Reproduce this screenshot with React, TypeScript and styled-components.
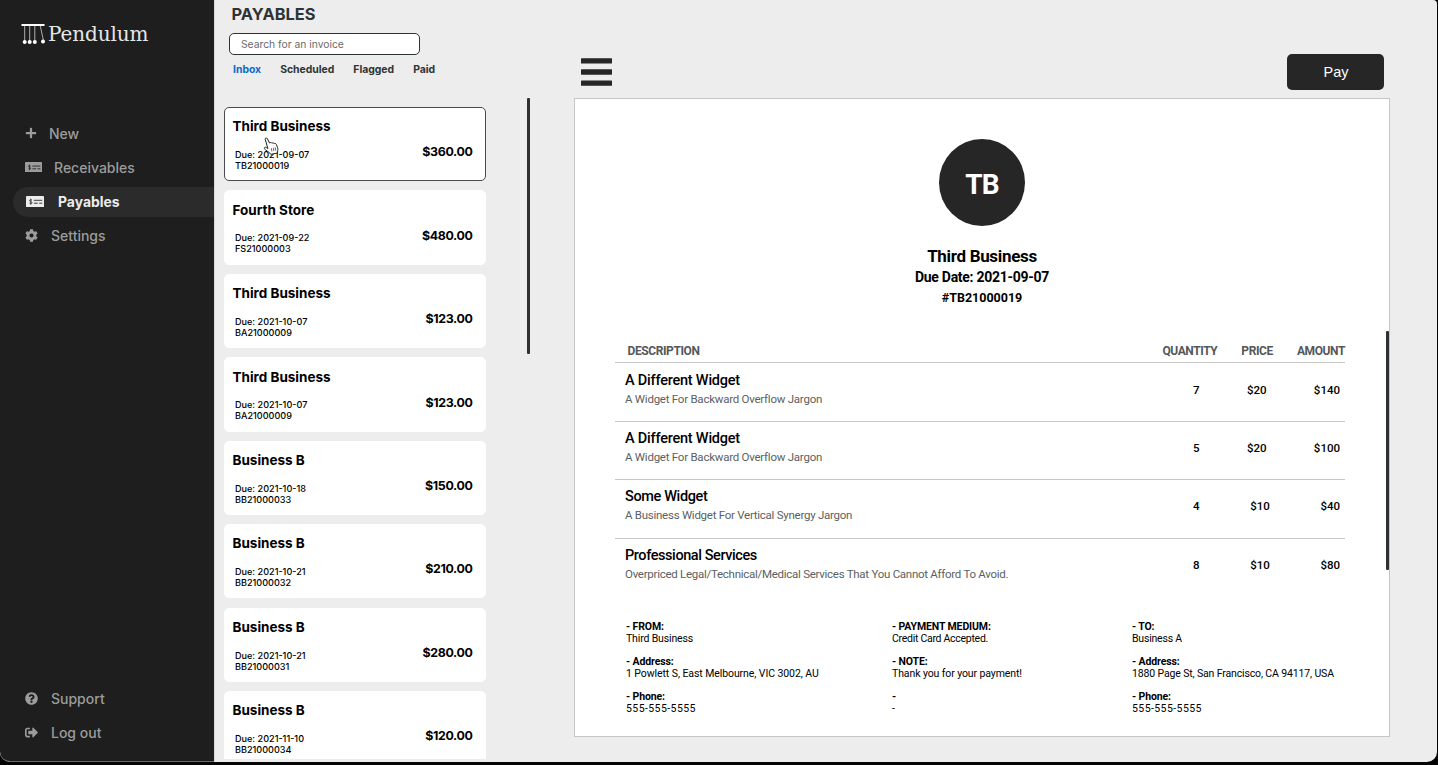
import React from "react";
import styled, { createGlobalStyle } from "styled-components";
import { FaPlus, FaCog, FaQuestionCircle, FaSignOutAlt } from "react-icons/fa";

const ui = `Inter, "Liberation Sans", sans-serif`;
const doc = `Roboto, "Noto Sans", sans-serif`;

const GlobalStyle = createGlobalStyle`
  * { box-sizing: border-box; }
  body { margin: 0; background: #000; overflow: hidden; }
  p, h1, h2, h3 { margin: 0; }
  button { font: inherit; border: 0; padding: 0; background: none; }
`;

const Screen = styled.div`
  height: 765px;
  background: #050506;
  font-family: ${ui};
`;

const Window = styled.div`
  display: flex;
  width: 1437px;
  height: 762px;
  background: #ededed;
  border-radius: 0 4px 10px 10px;
  overflow: hidden;
`;

const Sidebar = styled.nav`
  display: flex;
  flex-direction: column;
  flex: none;
  width: 214px;
  background: #1e1e1e;
  border-bottom: 1px solid #6a6a6a;
  border-bottom-left-radius: 10px;
`;

const Brand = styled.div`
  display: flex;
  gap: 3px;
  height: 119px;
  padding: 23px 0 0 21px;
`;

const BrandName = styled.span`
  font: 20px/22px "DejaVu Serif", serif;
  letter-spacing: -0.1px;
  color: #e6e6e6;
`;

const NavList = styled.div<{ $bottom?: boolean }>`
  display: flex;
  flex-direction: column;
  gap: 4px;
  ${(p) => p.$bottom && "margin-top: auto; padding-bottom: 13px;"}
`;

const NavItem = styled.button<{ $active?: boolean; $gap: number }>`
  display: flex;
  align-items: center;
  gap: ${(p) => p.$gap}px;
  height: 30px;
  margin-left: 13px;
  padding-left: ${(p) => (p.$active ? 13 : 12)}px;
  padding-bottom: ${(p) => (p.$active ? 1 : 2)}px;
  border-radius: 15px 0 0 15px;
  background: ${(p) => (p.$active ? "#2b2b2b" : "transparent")};
  color: ${(p) => (p.$active ? "#ececec" : "#9c9c9c")};
  font-size: ${(p) => (p.$active ? 13.9 : 14)}px;
  font-weight: ${(p) => (p.$active ? 700 : 500)};
  text-align: left;
`;

const ListPane = styled.section`
  display: flex;
  flex-direction: column;
  flex: none;
  width: 346px;
  border-left: 1px solid #d8d8d8;
`;

const ListHeader = styled.header`
  height: 98px;
  padding: 4px 0 0 14px;
`;

const Title = styled.h1`
  padding-left: 2.5px;
  font-size: 16.4px;
  line-height: 21px;
  font-weight: 700;
  color: #2d3436;
`;

const Search = styled.input`
  display: block;
  width: 191px;
  height: 22px;
  margin-top: 8px;
  padding: 0 11px;
  border: 1.5px solid #2d3436;
  border-radius: 5px;
  background: #fff;
  font: 10.3px ${ui};
  &::placeholder { color: #6b6b6b; }
`;

const Tabs = styled.div`
  display: flex;
  gap: 19px;
  padding: 8px 0 0 4px;
`;

const Tab = styled.button<{ $active?: boolean }>`
  font-size: 10.4px;
  line-height: 14px;
  font-weight: 700;
  color: ${(p) => (p.$active ? "#0b6cc9" : "#2d3436")};
`;

const ListBody = styled.div`
  display: flex;
  justify-content: space-between;
  height: 661px;
  overflow: hidden;
  padding-right: 30px;
`;

const Cards = styled.div`
  display: flex;
  flex-direction: column;
  gap: 9.26px;
  padding: 9px 0 0 9px;
`;

const Card = styled.article<{ $selected?: boolean }>`
  display: flex;
  justify-content: space-between;
  flex: none;
  width: 262px;
  height: 74.2px;
  padding: 10.2px 12.5px 0 7.5px;
  border: 1px solid ${(p) => (p.$selected ? "#4a4a4e" : "#fff")};
  border-radius: 5px;
  background: #fff;
  color: #000;
`;

const CardName = styled.h2`
  font-size: 13.5px;
  line-height: 17px;
  font-weight: 700;
`;

const CardMeta = styled.p`
  padding: 13.8px 0 0 2.5px;
  font-size: 9.1px;
  line-height: 11px;
  font-weight: 500;
`;

const CardTotal = styled.strong`
  padding-top: 25px;
  font-size: 12.4px;
  line-height: 18px;
  font-weight: 700;
  letter-spacing: -0.35px;
`;

const Thumb = styled.div<{ $height: number }>`
  width: 3px;
  height: ${(p) => p.$height}px;
  border-radius: 1px;
  background: #2d3133;
`;

const Detail = styled.main`
  flex: 1;
  padding: 54px 47px 0 14px;
`;

const Toolbar = styled.div`
  display: flex;
  justify-content: space-between;
  height: 44px;
  padding: 0 6px 0 7px;
`;

const MenuIcon = styled.svg`
  margin-top: 4px;
`;

const PayButton = styled.button`
  width: 97px;
  height: 36px;
  padding: 0 0 1px 1px;
  border-radius: 5px;
  background: #262626;
  color: #fff;
  font-family: "Liberation Sans", sans-serif;
  font-size: 14.5px;
`;

const Invoice = styled.article`
  display: flex;
  flex-direction: column;
  height: 639px;
  border: 1px solid #c6c6c6;
  background: #fff;
  color: #000;
  font-family: ${doc};
`;

const Summary = styled.header`
  display: flex;
  flex-direction: column;
  align-items: center;
  height: 232px;
  padding-top: 40px;
`;

const Avatar = styled.div`
  display: flex;
  align-items: center;
  justify-content: center;
  width: 86px;
  height: 87px;
  margin-bottom: 19px;
  border-radius: 50%;
  background: #262626;
  color: #fff;
  font-size: 28px;
  font-weight: 700;
  letter-spacing: -0.8px;
  padding-top: 3px;
`;

const SummaryLine = styled.p<{ $size: number; $height: number; $track?: number }>`
  font-size: ${(p) => p.$size}px;
  line-height: ${(p) => p.$height}px;
  letter-spacing: ${(p) => p.$track ?? 0}px;
  font-weight: 700;
`;

const Items = styled.section`
  display: flex;
  justify-content: space-between;
  height: 286px;
  padding-left: 40px;
`;

const ItemTable = styled.div`
  width: 730px;
`;

const ItemHead = styled.div`
  display: flex;
  align-items: center;
  height: 32px;
  padding: 9px 0 0 12.5px;
  border-bottom: 1px solid #c6c6c6;
  color: #54585a;
  font-size: 12px;
  font-weight: 700;
`;

const HeadCell = styled.span<{ $left?: number; $track: number }>`
  margin-left: ${(p) => p.$left ?? 0}px;
  letter-spacing: ${(p) => p.$track}px;
`;

const Push = styled.span`
  flex: 1;
`;

const ItemRow = styled.div`
  display: flex;
  justify-content: space-between;
  height: 58.2px;
  padding: 8px 5px 0 10px;
  & + & { border-top: 1px solid #c6c6c6; padding-top: 7px; }
`;

const ItemName = styled.h3<{ $track: number }>`
  font-size: 14.5px;
  line-height: 19px;
  font-weight: 500;
  letter-spacing: ${(p) => p.$track}px;
`;

const ItemNote = styled.p<{ $track: number }>`
  font-size: 11.5px;
  line-height: 19px;
  color: #5c5f61;
  letter-spacing: ${(p) => p.$track}px;
`;

const Figures = styled.div`
  display: flex;
  justify-content: space-between;
  width: 147px;
  padding-top: 11px;
  font-size: 11.5px;
  line-height: 17px;
  font-weight: 500;
`;

const Parties = styled.footer`
  display: grid;
  grid-template-columns: 266px 240px auto;
  padding: 4px 0 0 51px;
`;

const Party = styled.dl`
  display: flex;
  flex-direction: column;
  gap: 11px;
  margin: 0;
  font-size: 10.5px;
  line-height: 12px;
  white-space: nowrap;
`;

const PartyLabel = styled.dt`
  font-weight: 700;
  letter-spacing: -0.12px;
`;

const PartyValue = styled.dd<{ $track: number }>`
  margin: 0;
  letter-spacing: ${(p) => p.$track}px;
`;

const Pointer = styled.svg`
  position: absolute;
  left: 263px;
  top: 137px;
`;

const invoices = [
  ["Third Business", "2021-09-07", "TB21000019", "$360.00"],
  ["Fourth Store", "2021-09-22", "FS21000003", "$480.00"],
  ["Third Business", "2021-10-07", "BA21000009", "$123.00"],
  ["Third Business", "2021-10-07", "BA21000009", "$123.00"],
  ["Business B", "2021-10-18", "BB21000033", "$150.00"],
  ["Business B", "2021-10-21", "BB21000032", "$210.00"],
  ["Business B", "2021-10-21", "BB21000031", "$280.00"],
  ["Business B", "2021-11-10", "BB21000034", "$120.00"],
];

type Item = {
  name: string;
  note: string;
  figures: string[];
  nameTrack: number;
  noteTrack: number;
};

const items: Item[] = [
  {
    name: "A Different Widget",
    note: "A Widget For Backward Overflow Jargon",
    figures: ["7", "$20", "$140"],
    nameTrack: -0.22,
    noteTrack: -0.24,
  },
  {
    name: "A Different Widget",
    note: "A Widget For Backward Overflow Jargon",
    figures: ["5", "$20", "$100"],
    nameTrack: -0.22,
    noteTrack: -0.24,
  },
  {
    name: "Some Widget",
    note: "A Business Widget For Vertical Synergy Jargon",
    figures: ["4", "$10", "$40"],
    nameTrack: -0.36,
    noteTrack: -0.26,
  },
  {
    name: "Professional Services",
    note: "Overpriced Legal/Technical/Medical Services That You Cannot Afford To Avoid.",
    figures: ["8", "$10", "$80"],
    nameTrack: -0.42,
    noteTrack: -0.27,
  },
];

type Entry = [label: string, value: string, track: number];

const parties: Entry[][] = [
  [
    ["- FROM:", "Third Business", -0.15],
    ["- Address:", "1 Powlett S, East Melbourne, VIC 3002, AU", -0.08],
    ["- Phone:", "555-555-5555", 0.42],
  ],
  [
    ["- PAYMENT MEDIUM:", "Credit Card Accepted.", -0.28],
    ["- NOTE:", "Thank you for your payment!", -0.1],
    ["-", "-", 0],
  ],
  [
    ["- TO:", "Business A", -0.2],
    ["- Address:", "1880 Page St, San Francisco, CA 94117, USA", -0.14],
    ["- Phone:", "555-555-5555", 0.42],
  ],
];

const Logo = () => (
  <svg width="24" height="22" viewBox="0 0 24 22" fill="#fff">
    <rect x="0.5" y="1" width="23" height="2" />
    <g stroke="#bdbdbd" strokeWidth="0.9">
      <path d="M3.7 3v15M8.7 3v15M13.8 3v15M19.3 3l3 14" />
    </g>
    <circle cx="3.7" cy="19" r="2" />
    <circle cx="8.7" cy="19" r="2" />
    <circle cx="13.8" cy="19" r="2" />
    <circle cx="22" cy="18.4" r="2" />
  </svg>
);

const CheckIcon = ({ width, ink }: { width: number; ink: string }) => (
  <svg width={width} height={(width * 11.6) / 18} viewBox="0 0 18 11.6">
    <rect width="18" height="11.6" rx="0.8" fill="currentColor" />
    <g fill="none" stroke={ink}>
      <path
        d="M5.900 4.300C5.500 3.600 3.600 3.500 3.600 4.600c0 1.200 2.400.8 2.400 2.100 0 1.200-2.100 1.100-2.500.3M4.800 2.700v6"
        strokeWidth="0.8"
      />
      <path d="M7.800 4.300h8.500M7.800 7.200h4M13.200 7.200h3.100" strokeWidth="0.9" />
    </g>
  </svg>
);

export default function App() {
  return (
    <Screen>
      <GlobalStyle />
      <Window>
        <Sidebar>
          <Brand>
            <Logo />
            <BrandName>Pendulum</BrandName>
          </Brand>
          <NavList>
            <NavItem $gap={12}><FaPlus size={12} />New</NavItem>
            <NavItem $gap={12}><CheckIcon width={17} ink="#1e1e1e" />Receivables</NavItem>
            <NavItem $gap={14} $active><CheckIcon width={18} ink="#2b2b2b" />Payables</NavItem>
            <NavItem $gap={13}><FaCog size={13} />Settings</NavItem>
          </NavList>
          <NavList $bottom>
            <NavItem $gap={13}><FaQuestionCircle size={13} />Support</NavItem>
            <NavItem $gap={13}><FaSignOutAlt size={13} />Log out</NavItem>
          </NavList>
        </Sidebar>

        <ListPane>
          <ListHeader>
            <Title>PAYABLES</Title>
            <Search placeholder="Search for an invoice" />
            <Tabs>
              <Tab $active>Inbox</Tab>
              <Tab>Scheduled</Tab>
              <Tab>Flagged</Tab>
              <Tab>Paid</Tab>
            </Tabs>
          </ListHeader>
          <ListBody>
            <Cards>
              {invoices.map(([name, due, code, total], i) => (
                <Card key={i} $selected={i === 0}>
                  <div>
                    <CardName>{name}</CardName>
                    <CardMeta>
                      Due: {due}
                      <br />
                      {code}
                    </CardMeta>
                  </div>
                  <CardTotal>{total}</CardTotal>
                </Card>
              ))}
            </Cards>
            <Thumb $height={256} />
          </ListBody>
        </ListPane>

        <Detail>
          <Toolbar>
            <MenuIcon width="31" height="28" fill="#262626">
              <rect y="0.2" width="31" height="5.4" rx="0.6" />
              <rect y="11.3" width="31" height="5.4" rx="0.6" />
              <rect y="22.4" width="31" height="5.4" rx="0.6" />
            </MenuIcon>
            <PayButton>Pay</PayButton>
          </Toolbar>
          <Invoice>
            <Summary>
              <Avatar>TB</Avatar>
              <SummaryLine $size={17} $height={22} $track={-0.32}>Third Business</SummaryLine>
              <SummaryLine $size={14} $height={20} $track={-0.27}>Due Date: 2021-09-07</SummaryLine>
              <SummaryLine $size={12.5} $height={21.500}>#TB21000019</SummaryLine>
            </Summary>
            <Items>
              <ItemTable>
                <ItemHead>
                  <HeadCell $track={-0.4}>DESCRIPTION</HeadCell>
                  <Push />
                  <HeadCell $track={-0.4}>QUANTITY</HeadCell>
                  <HeadCell $left={24} $track={-0.4}>PRICE</HeadCell>
                  <HeadCell $left={24} $track={-0.4}>AMOUNT</HeadCell>
                </ItemHead>
                {items.map((item, i) => (
                  <ItemRow key={i}>
                    <div>
                      <ItemName $track={item.nameTrack}>{item.name}</ItemName>
                      <ItemNote $track={item.noteTrack}>{item.note}</ItemNote>
                    </div>
                    <Figures>
                      {item.figures.map((figure, j) => (
                        <span key={j}>{figure}</span>
                      ))}
                    </Figures>
                  </ItemRow>
                ))}
              </ItemTable>
              <Thumb $height={239} />
            </Items>
            <Parties>
              {parties.map((entries, i) => (
                <Party key={i}>
                  {entries.map(([label, value, track], j) => (
                    <div key={j}>
                      <PartyLabel>{label}</PartyLabel>
                      <PartyValue $track={track}>{value}</PartyValue>
                    </div>
                  ))}
                </Party>
              ))}
            </Parties>
          </Invoice>
        </Detail>
      </Window>
      <Pointer width="16" height="18" viewBox="0 0 16 18">
        <path
          d="M2.2 2.2C2 .8 3.8.5 4.4 1.7L6.5 6c1-.8 2-.6 2.4.2.9-.6 1.9-.4 2.3.4.9-.4 1.8 0 2.2.9l1.2 3.2c.5 1.500.2 2.600-.2 3.700l-.3 1.800-6.300 1.100-1-1.300L2.200 12.600C1.200 11.600 1 10.800 1.700 10.400c.7-.4 1.700 0 2.500.8l.7.500z"
          fill="#fff"
          stroke="#222"
          strokeWidth="1"
          strokeLinejoin="round"
        />
        <path d="M8.300 11.200l.6 3.200M10.300 10.800l.6 3.200M12.200 10.400l.6 3.200" stroke="#444" strokeWidth="0.8" />
      </Pointer>
    </Screen>
  );
}
